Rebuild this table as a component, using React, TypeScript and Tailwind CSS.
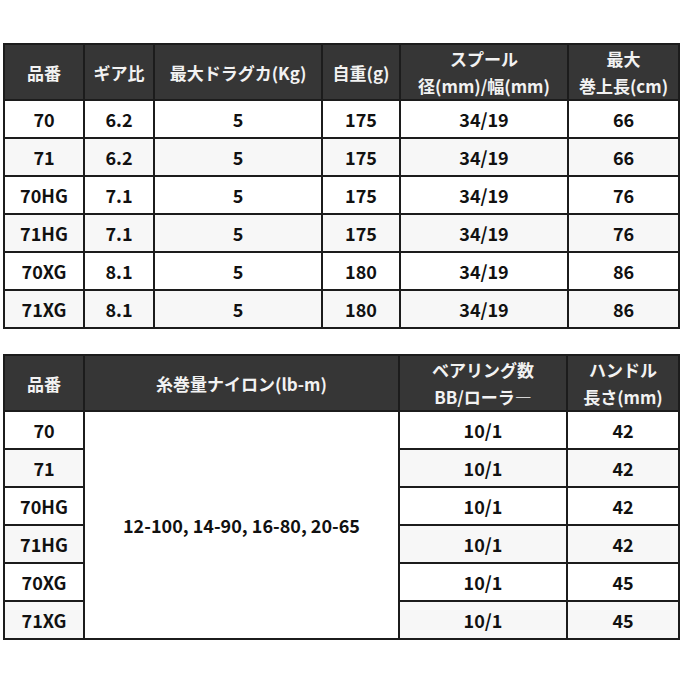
const specRows = [
  ['70', '6.2', '5', '175', '34/19', '66'],
  ['71', '6.2', '5', '175', '34/19', '66'],
  ['70HG', '7.1', '5', '175', '34/19', '76'],
  ['71HG', '7.1', '5', '175', '34/19', '76'],
  ['70XG', '8.1', '5', '180', '34/19', '86'],
  ['71XG', '8.1', '5', '180', '34/19', '86'],
];

const lineRows = [
  ['70', '10/1', '42'],
  ['71', '10/1', '42'],
  ['70HG', '10/1', '42'],
  ['71HG', '10/1', '42'],
  ['70XG', '10/1', '45'],
  ['71XG', '10/1', '45'],
];

const th = 'border-2 border-[#1c1c1c] bg-[#363636] text-[#f2f2f2] font-bold text-center align-middle text-[17px] leading-[27px]';
const td = 'border-2 border-[#1c1c1c] text-[#111] font-bold text-center align-middle text-[18px]';

const App = () => {
  return (
    <div
      className="w-[680px] h-[680px] bg-white pt-[43px] pl-[3px]"
      style={{ fontFamily: '"Noto Sans CJK JP", "Noto Sans", sans-serif' }}
    >
      {/* spec table */}
      <table className="w-[675px] table-fixed border-collapse">
        <colgroup>
          <col className="w-[80px]" />
          <col className="w-[70px]" />
          <col className="w-[168px]" />
          <col className="w-[78px]" />
          <col className="w-[168px]" />
          <col className="w-[111px]" />
        </colgroup>
        <thead>
          <tr className="h-[56px]">
            <th className={th}>品番</th>
            <th className={th}>ギア比</th>
            <th className={th}>最大ドラグカ(Kg)</th>
            <th className={th}>自重(g)</th>
            <th className={th}>
              スプール
              <br />
              径(mm)/幅(mm)
            </th>
            <th className={th}>
              最大
              <br />
              巻上長(cm)
            </th>
          </tr>
        </thead>
        <tbody>
          {specRows.map((row, i) => (
            <tr key={row[0]} className={i % 2 === 1 ? 'h-[38px] bg-[#f7f7f7]' : 'h-[38px] bg-white'}>
              {row.map((cell, j) => (
                <td key={j} className={td}>
                  {cell}
                </td>
              ))}
            </tr>
          ))}
        </tbody>
      </table>

      {/* line capacity table */}
      <table className="w-[675px] table-fixed border-collapse mt-[25px]">
        <colgroup>
          <col className="w-[80px]" />
          <col className="w-[315px]" />
          <col className="w-[168px]" />
          <col className="w-[112px]" />
        </colgroup>
        <thead>
          <tr className="h-[55px]">
            <th className={th}>品番</th>
            <th className={th}>糸巻量ナイロン(lb-m)</th>
            <th className={th}>
              ベアリング数
              <br />
              BB/ローラ―
            </th>
            <th className={th}>
              ハンドル
              <br />
              長さ(mm)
            </th>
          </tr>
        </thead>
        <tbody>
          {lineRows.map((row, i) => (
            <tr key={row[0]} className={i % 2 === 1 ? 'h-[38px] bg-[#f7f7f7]' : 'h-[38px] bg-white'}>
              <td className={td}>{row[0]}</td>
              {i === 0 && (
                <td rowSpan={6} className={td + ' bg-white'}>
                  12-100, 14-90, 16-80, 20-65
                </td>
              )}
              <td className={td}>{row[1]}</td>
              <td className={td}>{row[2]}</td>
            </tr>
          ))}
        </tbody>
      </table>
    </div>
  );
};

export default App;
